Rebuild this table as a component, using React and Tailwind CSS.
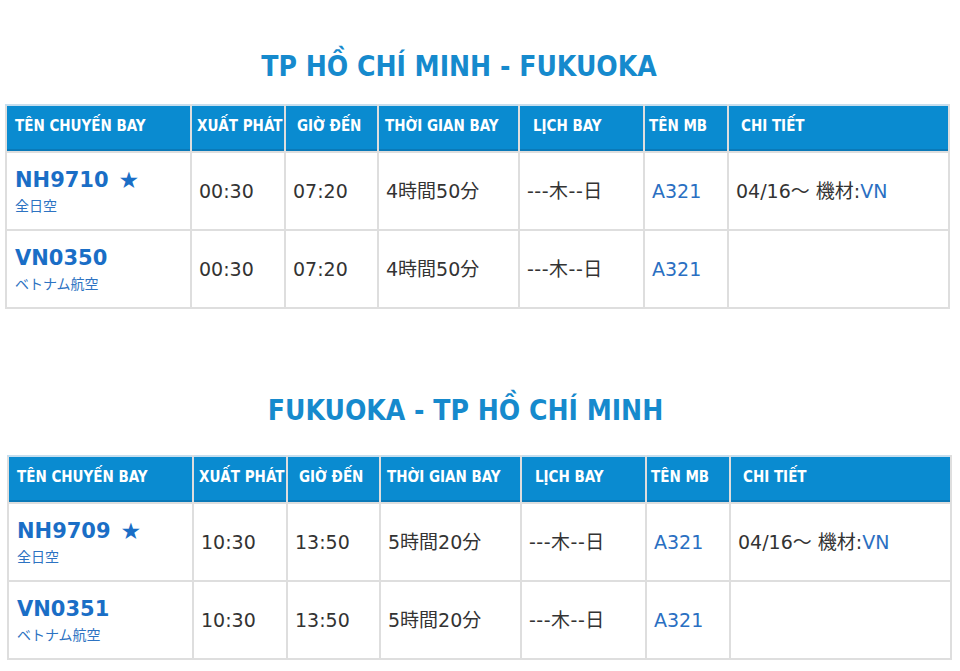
import React from 'react';

const routes = [
  {
    title: 'TP HỒ CHÍ MINH - FUKUOKA',
    shift: 'ml-[5px]',
    titleGap: 'mt-[53px] mb-[23px] pr-[42px]',
    flights: [
      { no: 'NH9710', star: true, airline: '全日空', dep: '00:30', arr: '07:20', dur: '4時間50分', days: '---木--日', plane: 'A321', note: true },
      { no: 'VN0350', star: false, airline: 'ベトナム航空', dep: '00:30', arr: '07:20', dur: '4時間50分', days: '---木--日', plane: 'A321', note: false },
    ],
  },
  {
    title: 'FUKUOKA - TP HỒ CHÍ MINH',
    shift: 'ml-[7px]',
    titleGap: 'mt-[88px] mb-[30px] pr-[29px]',
    flights: [
      { no: 'NH9709', star: true, airline: '全日空', dep: '10:30', arr: '13:50', dur: '5時間20分', days: '---木--日', plane: 'A321', note: true },
      { no: 'VN0351', star: false, airline: 'ベトナム航空', dep: '10:30', arr: '13:50', dur: '5時間20分', days: '---木--日', plane: 'A321', note: false },
    ],
  },
];

const headers = [
  { label: 'TÊN CHUYẾN BAY', pad: 'pl-[8px]' },
  { label: 'XUẤT PHÁT', pad: 'pl-[5px]' },
  { label: 'GIỜ ĐẾN', pad: 'pl-[11px]' },
  { label: 'THỜI GIAN BAY', pad: 'pl-[6px]' },
  { label: 'LỊCH BAY', pad: 'pl-[13px]' },
  { label: 'TÊN MB', pad: 'pl-[4px]' },
  { label: 'CHI TIẾT', pad: 'pl-[12px]' },
];

const cell = 'border-2 border-[#dedede] pl-[7px] align-middle';

const FlightTable = ({ route }) => (
  <section>
    <h2
      className={`${route.titleGap} text-center text-[28px] leading-[28px] font-bold text-[#168acd]`}
      style={{ fontFamily: '"DejaVu Sans Condensed", "DejaVu Sans", sans-serif' }}
    >
      {route.title}
    </h2>
    <table className={`${route.shift} w-[945px] table-fixed border-collapse text-[#333]`}>
      <colgroup>
        <col className="w-[185px]" />
        <col className="w-[94px]" />
        <col className="w-[93px]" />
        <col className="w-[141px]" />
        <col className="w-[125px]" />
        <col className="w-[84px]" />
        <col />
      </colgroup>
      <thead>
        <tr className="h-[47px]">
          {headers.map((h) => (
            <th
              key={h.label}
              className={`${h.pad} border-x-2 border-t-2 border-b-2 border-x-[#dedede] border-t-[#c6deee] border-b-[#dedede] bg-[#0a8bd0] pb-[5px] text-left text-[15px] font-bold whitespace-nowrap text-white shadow-[inset_0_-2px_0_#0a79b8]`}
              style={{ fontFamily: '"DejaVu Sans Condensed", "DejaVu Sans", sans-serif' }}
            >
              {h.label}
            </th>
          ))}
        </tr>
      </thead>
      <tbody style={{ fontFamily: '"DejaVu Sans", "Noto Sans CJK JP", sans-serif' }}>
        {route.flights.map((f) => (
          <tr key={f.no} className="h-[78px] text-[19px]">
            <td className={`${cell} pl-[8px]`}>
              <div className="flex items-center gap-[10px] text-[21px] leading-[24px] font-bold text-[#1a6ec6]">
                <span>{f.no}</span>
                {f.star && <span className="text-[23px] leading-[24px]">★</span>}
              </div>
              <div
                className="mt-[4px] text-[14px] leading-[18px] text-[#2d73c2]"
                style={{ fontFamily: '"Noto Sans CJK JP", sans-serif' }}
              >
                {f.airline}
              </div>
            </td>
            <td className={cell}>{f.dep}</td>
            <td className={cell}>{f.arr}</td>
            <td className={cell}>{f.dur}</td>
            <td className={`${cell} tracking-[0.5px]`}>{f.days}</td>
            <td className={`${cell} text-[#2a6fc2]`}>{f.plane}</td>
            <td className={cell}>
              {f.note && (
                <span>
                  04/16～ 機材:<span className="text-[#2a6fc2]">VN</span>
                </span>
              )}
            </td>
          </tr>
        ))}
      </tbody>
    </table>
  </section>
);

export default function App() {
  return (
    <div className="min-h-[671px] w-[960px] overflow-hidden bg-white">
      {routes.map((r) => (
        <FlightTable key={r.title} route={r} />
      ))}
    </div>
  );
}
